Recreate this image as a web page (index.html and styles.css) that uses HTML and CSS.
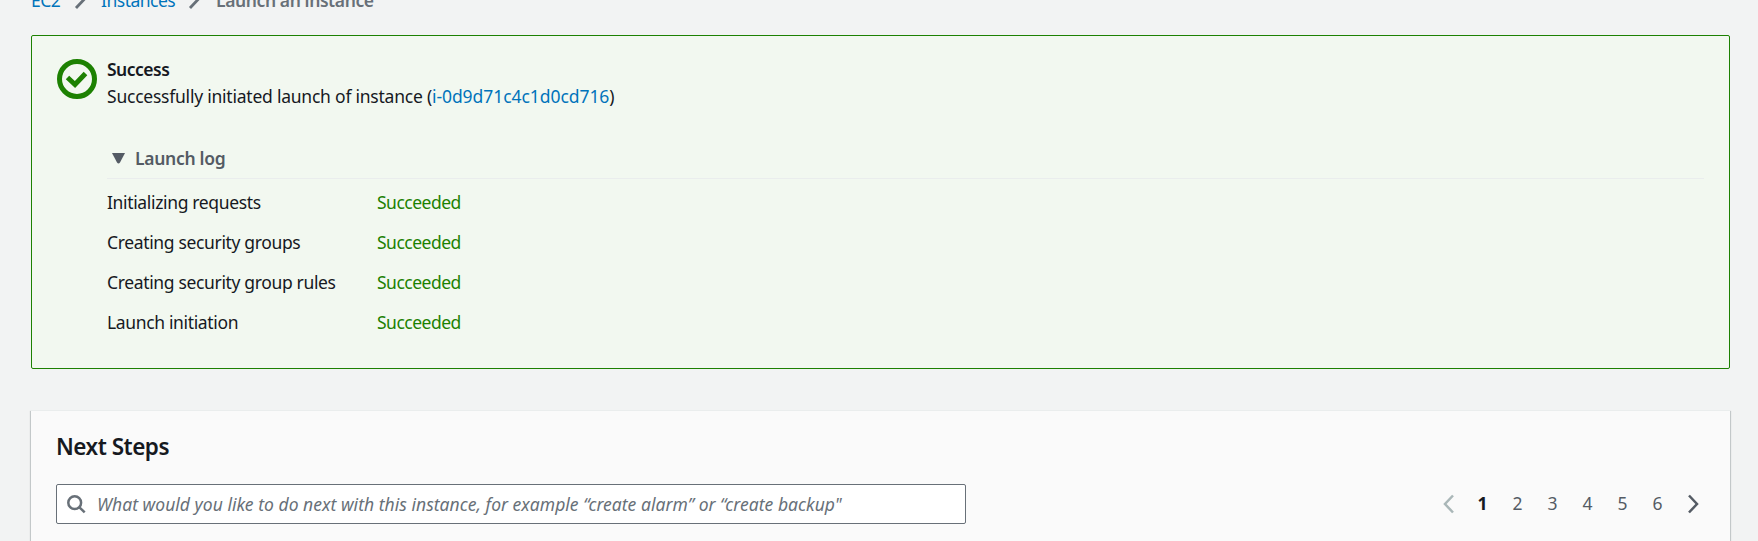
FILE: index.html
```html
<!DOCTYPE html>
<html lang="en">
<head>
<meta charset="utf-8">
<title>Launch an instance</title>
<link rel="stylesheet" href="styles.css">
</head>
<body>
<nav class="breadcrumbs">
  <a class="crumb-ec2">EC2</a>
  <svg class="crumb-sep" width="13" height="22" viewBox="0 0 13 22"><path d="M2 2l8.500 9L2 20"/></svg>
  <a class="crumb-instances">Instances</a>
  <svg class="crumb-sep" width="13" height="22" viewBox="0 0 13 22"><path d="M2 2l8.500 9L2 20"/></svg>
  <span class="crumb-current">Launch an instance</span>
</nav>
<section class="banner">
  <svg class="success-icon" width="40" height="40" viewBox="0 0 40 40"><circle cx="20" cy="20" r="17.500"/><path d="M10.500 18.500l7.500 7L28.500 14.500"/></svg>
  <div class="banner-body">
    <h3 class="banner-title">Success</h3>
    <p class="banner-message"><span>Successfully initiated launch of instance (</span><a>i-0d9d71c4c1d0cd716</a><span>)</span></p>
    <div class="log-head"><svg width="13" height="11" viewBox="0 0 13 11"><path d="M0 0h13L8 9.500Q6.500 11.500 5 9.500z"/></svg><span>Launch log</span></div>
    <div class="log">
      <span class="l1">Initializing requests</span><span class="ok">Succeeded</span>
      <span class="l2">Creating security groups</span><span class="ok">Succeeded</span>
      <span class="l3">Creating security group rules</span><span class="ok">Succeeded</span>
      <span class="l4">Launch initiation</span><span class="ok">Succeeded</span>
    </div>
  </div>
</section>
<section class="steps">
  <h2 class="steps-title">Next Steps</h2>
  <div class="toolbar">
    <div class="search">
      <svg width="19" height="19" viewBox="0 0 19 19"><circle cx="7.700" cy="7.700" r="6.400"/><path d="M12.200 12.200l5.500 5.200"/></svg>
      <span class="placeholder">What would you like to do next with this instance, for example “create alarm” or “create backup"</span>
    </div>
    <div class="pages">
      <svg class="prev" width="12" height="20" viewBox="0 0 12 20"><path d="M10 1.500L2 10l8 8.500"/></svg>
      <span class="current">1</span><span>2</span><span>3</span><span>4</span><span>5</span><span>6</span>
      <svg class="next" width="12" height="20" viewBox="0 0 12 20"><path d="M2 1.500L10 10l-8 8.500"/></svg>
    </div>
  </div>
</section>
</body>
</html>
```
FILE: styles.css
```css
* { box-sizing: border-box; }
body {
  margin: 0;
  height: 541px;
  overflow: hidden;
  background: #f2f3f3;
  font: 17.5px/26px "Noto Sans", "Open Sans", sans-serif;
  color: #16191f;
  white-space: nowrap;
}
svg { flex: none; fill: none; }
h2, h3, p { margin: 0; }
a { color: #0073bb; }
.breadcrumbs {
  display: flex;
  align-items: center;
  height: 26px;
  margin: -13px 0 22px 31px;
}
.crumb-ec2 { width: 43px; letter-spacing: -0.5px; }
.crumb-sep { position: relative; top: -1px; stroke: #687078; stroke-width: 2.8; }
.crumb-instances { width: 87px; margin-left: 14px; letter-spacing: -0.5px; }
.crumb-current { margin-left: 15px; font-weight: 600; color: #687078; letter-spacing: -0.4px; }
.banner {
  display: flex;
  gap: 10px;
  height: 334px;
  margin: 0 28px 0 31px;
  padding: 20px 25px 0;
  background: #f2f8f0;
  border: 1px solid #1d8102;
  border-radius: 2px;
}
.success-icon { margin-top: 3px; stroke: #1d8102; stroke-width: 5; }
.banner-body { flex: 1; }
.banner-title { font-size: 17.5px; font-weight: 600; line-height: 27px; letter-spacing: -0.5px; }
.banner-message { line-height: 27px; letter-spacing: -0.23px; }
.banner-message a { letter-spacing: -0.06px; }
.log-head {
  display: flex;
  align-items: center;
  gap: 10px;
  height: 48px;
  margin-top: 21px;
  padding: 7px 0 0 5px;
  border-bottom: 1px solid #eaeded;
  color: #545b64;
  font-weight: 600;
  letter-spacing: -0.3px;
}
.log-head svg { fill: #545b64; }
.log {
  display: grid;
  grid-template-columns: 270px 1fr;
  grid-auto-rows: 40px;
  padding-top: 3px;
  line-height: 40px;
  letter-spacing: -0.35px;
}
.ok { color: #1d8102; letter-spacing: -0.5px; }
.steps {
  height: 140px;
  margin: 41px 28px 0 31px;
  padding: 21px 25px 0;
  background: #fafafa;
  border-top: 1px solid #eaeded;
  box-shadow: 0 1px 1px rgba(0, 28, 36, 0.3), 1px 1px 1px rgba(0, 28, 36, 0.15), -1px 1px 1px rgba(0, 28, 36, 0.15);
}
.steps-title { font-size: 22.5px; font-weight: 600; line-height: 30px; letter-spacing: -0.5px; }
.toolbar { display: flex; justify-content: space-between; margin-top: 22px; }
.search {
  display: flex;
  align-items: center;
  gap: 11px;
  width: 910px;
  height: 40px;
  padding-left: 10px;
  background: #fff;
  border: 1px solid #687078;
  border-radius: 2px;
  color: #687078;
  font-style: italic;
}
.search svg { stroke: #687078; stroke-width: 2.5; }
.placeholder { letter-spacing: 0.03px; }
.pages { display: flex; align-items: center; padding-right: 6px; color: #545b64; }
.pages span { width: 35px; text-align: center; line-height: 38px; padding-bottom: 2px; }
.pages .current { color: #16191f; font-weight: 700; }
.pages svg { stroke-width: 2.5; }
.prev { margin-right: 10px; stroke: #aab7b8; }
.next { margin-left: 12px; stroke: #545b64; }
```
